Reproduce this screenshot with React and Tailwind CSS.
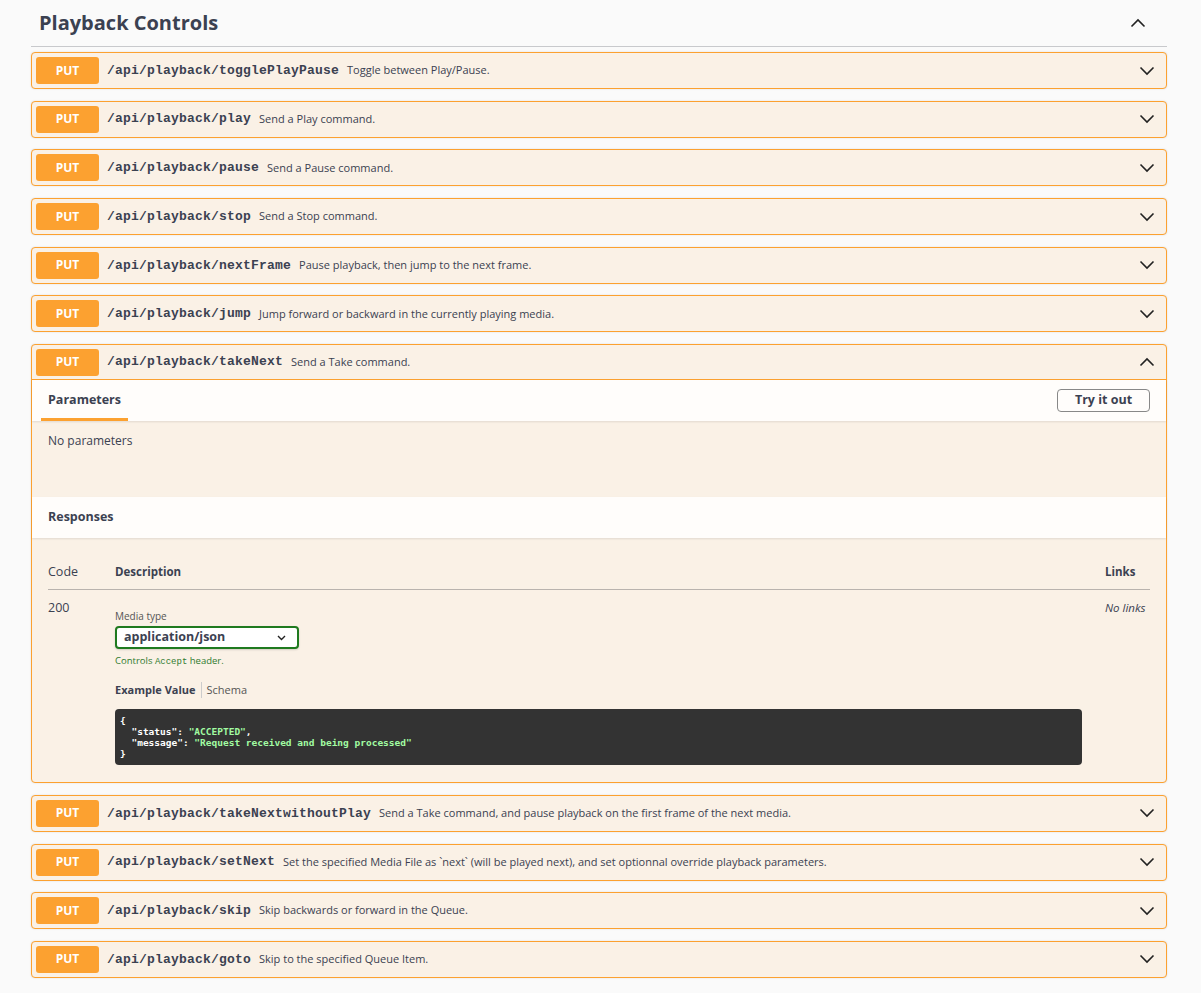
import React from 'react';

const ops = [
  { path: '/api/playback/togglePlayPause', desc: 'Toggle between Play/Pause.' },
  { path: '/api/playback/play', desc: 'Send a Play command.' },
  { path: '/api/playback/pause', desc: 'Send a Pause command.' },
  { path: '/api/playback/stop', desc: 'Send a Stop command.' },
  { path: '/api/playback/nextFrame', desc: 'Pause playback, then jump to the next frame.' },
  { path: '/api/playback/jump', desc: 'Jump forward or backward in the currently playing media.' },
  { path: '/api/playback/takeNext', desc: 'Send a Take command.', open: true },
  { path: '/api/playback/takeNextwithoutPlay', desc: 'Send a Take command, and pause playback on the first frame of the next media.' },
  { path: '/api/playback/setNext', desc: 'Set the specified Media File as `next` (will be played next), and set optionnal override playback parameters.' },
  { path: '/api/playback/skip', desc: 'Skip backwards or forward in the Queue.' },
  { path: '/api/playback/goto', desc: 'Skip to the specified Queue Item.' },
];

const Chevron = ({ up, className = '' }) => (
  <svg width="16" height="10" viewBox="0 0 16 10" className={className}>
    <polyline
      points={up ? '1.5,8.5 8,2 14.5,8.5' : '1.5,1.5 8,8 14.5,1.5'}
      fill="none"
      stroke="#222"
      strokeWidth="1.6"
    />
  </svg>
);

const Summary = ({ op }) => (
  <div className={`flex items-center h-[35px] px-[4px] ${op.open ? 'border-b border-[#fca130]' : ''}`}>
    <span className="w-[63px] h-[27px] flex items-center justify-center rounded-[3px] bg-[#fca130] text-white text-[12px] font-bold">
      PUT
    </span>
    <span className="ml-[8px] font-['Liberation_Mono',monospace] font-bold text-[13px] tracking-[0.2px] text-[#3b4151]">
      {op.path}
    </span>
    <span className="ml-[8px] text-[11px] text-[#3b4151]">{op.desc}</span>
    <Chevron up={op.open} className="ml-auto mr-[7px]" />
  </div>
);

const OpenBody = () => (
  <div>
    {/* Parameters */}
    <div className="flex items-center justify-between h-[41px] bg-[#fffdfb] shadow-[0_1px_2px_rgba(0,0,0,0.1)] pl-[9px] pr-[16px]">
      <div className="h-full flex flex-col">
        <div className="flex-1 flex items-center pt-[3px] px-[7px] text-[12.5px] font-bold text-[#3b4151]">Parameters</div>
        <div className="h-[3px] bg-[#fca130]"></div>
      </div>
      <button className="w-[93px] h-[23px] rounded-[4px] border border-[#888] bg-transparent text-[12.5px] font-bold text-[#3b4151]">
        Try it out
      </button>
    </div>
    <div className="h-[76px] px-[16px] pt-[11px] text-[12px] text-[#3b4151]">No parameters</div>

    {/* Responses */}
    <div className="flex items-center h-[41px] bg-[#fffdfb] shadow-[0_1px_2px_rgba(0,0,0,0.1)] px-[16px] text-[12.5px] font-bold text-[#3b4151]">
      Responses
    </div>
    <div className="px-[16px] pt-[24px] pb-[17px] text-[#3b4151]">
      <div className="flex items-baseline h-[28px] pt-[1px] border-b border-[#b9b3ae]">
        <div className="w-[67px] text-[12.5px]">Code</div>
        <div className="flex-1 text-[11.5px] font-bold">Description</div>
        <div className="w-[45px] text-[11.5px] font-bold">Links</div>
      </div>
      <div className="flex pt-[9px]">
        <div className="w-[67px] text-[12.5px]">200</div>
        <div className="flex-1 pt-[10px]">
          <div className="text-[10px] text-[#555]">Media type</div>
          <div className="mt-[2px] w-[184px] h-[23px] rounded-[4px] border-2 border-[#1f7a1f] bg-white flex items-center justify-between pl-[7px] pr-[11px] shadow-[0_1px_2px_rgba(0,0,0,0.15)]">
            <span className="text-[12.5px] font-bold text-[#3b4151]">application/json</span>
            <svg width="9" height="6" viewBox="0 0 9 6">
              <polyline points="1,1 4.5,4.5 8,1" fill="none" stroke="#222" strokeWidth="1.4" />
            </svg>
          </div>
          <div className="mt-[5px] text-[9.5px] text-[#2f7a2f]">
            Controls <span className="font-['Liberation_Mono',monospace] text-[9px]">Accept</span> header.
          </div>
          <div className="mt-[12px] flex items-center text-[11px]">
            <span className="font-bold pr-[5px] border-r border-[#ccc]">Example Value</span>
            <span className="pl-[5px] text-[#555]">Schema</span>
          </div>
          <div className="mt-[11px] mr-[23px] rounded-[4px] bg-[#333] px-[5px] py-[6px] font-['DejaVu_Sans_Mono',monospace] font-bold text-[9.5px] leading-[11px] text-white whitespace-pre">
            <div>{'{'}</div>
            <div>{'  "status": '}<span className="text-[#a2fca2]">"ACCEPTED"</span>,</div>
            <div>{'  "message": '}<span className="text-[#a2fca2]">"Request received and being processed"</span></div>
            <div>{'}'}</div>
          </div>
        </div>
        <div className="w-[45px] italic text-[11.5px] text-[#3b4151]">No links</div>
      </div>
    </div>
  </div>
);

export default function App() {
  return (
    <div className="min-h-[993px] bg-[#fafafa] font-['Open_Sans',sans-serif] text-[#3b4151]">
      <div className="ml-[31px] w-[1136px]">
        <div className="flex items-center justify-between h-[47px] border-b border-[#c8c9cc] pl-[8px] pr-[21px]">
          <h3 className="text-[20px] font-bold text-[#3b4151]">Playback Controls</h3>
          <Chevron up />
        </div>
        <div className="pt-[5px]">
          {ops.map((op) => (
            <div
              key={op.path}
              className="mb-[11.7px] rounded-[4px] border border-[#fca130] bg-[#faf1e6] shadow-[0_0_2px_rgba(0,0,0,0.12)]"
            >
              <Summary op={op} />
              {op.open && <OpenBody />}
            </div>
          ))}
        </div>
      </div>
    </div>
  );
}
